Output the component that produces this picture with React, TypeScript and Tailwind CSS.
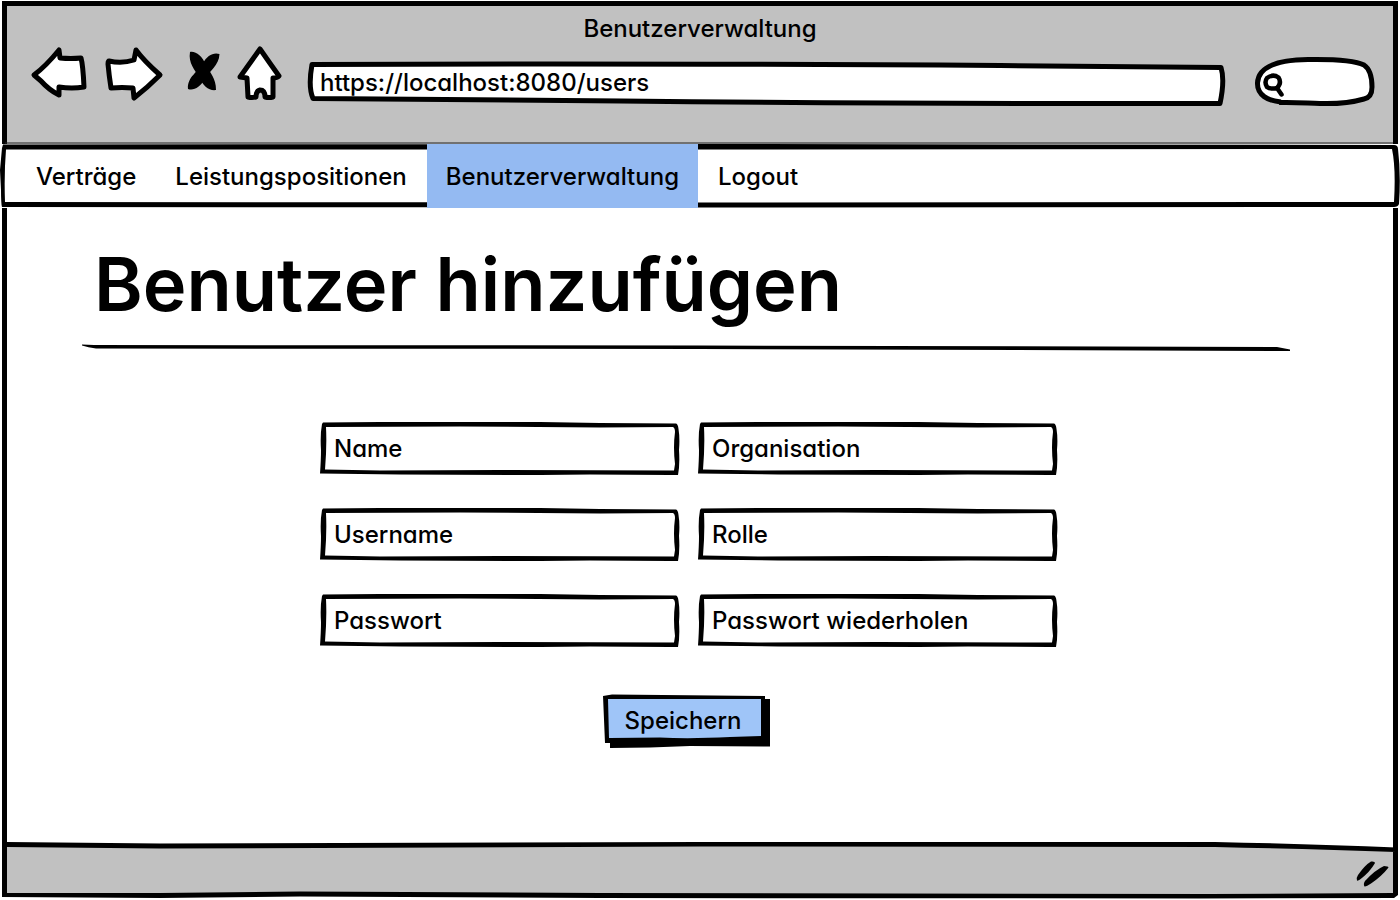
import type { ReactNode } from "react";

const navItems = [
  { label: "Verträge", href: "#vertraege" },
  { label: "Leistungspositionen", href: "#leistungspositionen" },
  { label: "Benutzerverwaltung", href: "#benutzerverwaltung", active: true },
  { label: "Logout", href: "#logout" },
];

const fields = [
  { id: "name", label: "Name", type: "text" },
  { id: "organisation", label: "Organisation", type: "text" },
  { id: "username", label: "Username", type: "text" },
  { id: "rolle", label: "Rolle", type: "text" },
  { id: "passwort", label: "Passwort", type: "password" },
  { id: "passwort-wiederholen", label: "Passwort wiederholen", type: "password" },
];

/** Hand-drawn outline that stretches to fill its parent. */
function Sketch({ viewBox, children }: { viewBox: string; children: ReactNode }) {
  return (
    <svg
      aria-hidden="true"
      viewBox={viewBox}
      preserveAspectRatio="none"
      className="pointer-events-none absolute inset-0 h-full w-full overflow-visible"
    >
      {children}
    </svg>
  );
}

function ToolButton({ label, viewBox, size, children }: { label: string; viewBox: string; size: string; children: ReactNode }) {
  return (
    <button type="button" aria-label={label} className="block shrink-0">
      <svg
        aria-hidden="true"
        viewBox={viewBox}
        className={`block h-15 overflow-visible ${size}`}
        fill="#fff"
        stroke="#000"
        strokeWidth="5"
        strokeLinejoin="round"
        strokeLinecap="round"
      >
        {children}
      </svg>
    </button>
  );
}

function BrowserBar() {
  return (
    <header className="mx-0.5 mt-px h-[143px] border-x-5 border-t-5 border-black bg-[#c1c1c1]">
      <div className="pt-1.5 text-center leading-[34px]">Benutzerverwaltung</div>
      <div className="flex items-end pr-[18px] pl-6">
        <div className="flex gap-[18px]">
          <ToolButton label="Zurück" viewBox="31 46 56 60" size="w-14">
            <path d="M34 75Q46 66 59 50L60 58Q71 59 81 58Q83 65 84 87Q72 89 59 87L59 95Q49 90 41 81Z" />
          </ToolButton>
          <ToolButton label="Vor" viewBox="105 46 58 60" size="w-[58px]">
            <path d="M109 61Q122 64 134 60L136 50Q144 61 160 75Q147 88 134 98L133 88Q122 87 111 88Q109 75 108 64Q108 61 109 61Z" />
          </ToolButton>
          <ToolButton label="Abbrechen" viewBox="181 46 39 60" size="w-[39px]">
            <path
              stroke="none"
              fill="#000"
              d="M190 52C196 51 202 56 206 65C210 73 216 78 216 90C209 91 203 86 199 77C195 70 188 63 190 52Z"
            />
            <path
              stroke="none"
              fill="#000"
              d="M219.500 54C213 52 207 56 203 63C198 72 187 77 188 89C194 91 200 87 205 79C209 71 219 66 219.500 54Z"
            />
          </ToolButton>
          <ToolButton label="Startseite" viewBox="238 46 46 60" size="w-[46px]">
            <path d="M260 49Q269 62 279 76Q277 78 273 78L273 97Q269 98 265 97Q265 90 260 90Q256 91 256 97Q252 98 248 97L247 78L240 77Q250 63 260 49Z" />
          </ToolButton>
        </div>
        <div className="relative ml-6 h-11 flex-1">
          <Sketch viewBox="307 61 918 44">
            <path
              d="M311 63.5Q620 62 1000 64.500L1221 66.500Q1225 79 1220 102.500Q900 103 620 100L312 97.500Q307 86 311 63.500Z"
              fill="#fff"
              stroke="#000"
              strokeWidth="5"
              strokeLinejoin="round"
            />
          </Sketch>
          <input
            aria-label="Adresse"
            type="text"
            defaultValue="https://localhost:8080/users"
            className="relative block h-10 w-full bg-transparent px-3 outline-none"
          />
        </div>
        <div className="relative ml-[30px] h-[50px] w-30">
          <Sketch viewBox="1255 56 120 50">
            <path
              d="M1281 102C1268 101 1257 95 1257.500 83C1258 70 1270 60 1308 59.500C1340 59 1358 62 1364 65C1370 69 1372 78 1372 87C1372 95 1369 98 1364 99C1350 103 1335 104 1320 103.500C1305 103 1295 102 1279 102.500"
              fill="#fff"
              stroke="#000"
              strokeWidth="5"
            />
            <path
              d="M1277 88Q1270 89.500 1267 87Q1264 82 1267 78Q1273 73.500 1278.500 77.500Q1282 83 1277 88L1281.500 94.500"
              fill="none"
              stroke="#000"
              strokeWidth="4.5"
              strokeLinecap="round"
              strokeLinejoin="round"
            />
          </Sketch>
          <input aria-label="Suche" type="search" className="relative block h-full w-full bg-transparent pr-4 pl-8 outline-none" />
        </div>
      </div>
    </header>
  );
}

function MainNav() {
  return (
    <nav aria-label="Hauptmenü" className="relative h-16">
      <Sketch viewBox="0 0 1400 64">
        <path
          fillRule="evenodd"
          d="M3 .5L700 0L1394 1Q1398 1 1398 5Q1401 30 1399 60Q1398 63 1394 63L700 63.500L2 63Q1 60 1 46L0 26L2 4ZM6 5.500L700 5.500L1392 5Q1396 24 1394 58L700 58.500L5 58Q4 30 6 5.500Z"
        />
        <path d="M5 -1.500H1393V-.5H900L5 -.5Z" fill="#222" />
      </Sketch>
      <ul className="relative flex h-full gap-px pl-[17px]">
        {navItems.map((item) => (
          <li key={item.label}>
            <a
              href={item.href}
              aria-current={item.active ? "page" : undefined}
              className={`flex h-full items-center px-[19px] pt-0.5 ${item.active ? "bg-[#94baf2]" : ""}`}
            >
              {item.label}
            </a>
          </li>
        ))}
      </ul>
    </nav>
  );
}

function Field({ id, label, type }: { id: string; label: string; type: string }) {
  return (
    <div className="relative h-[53px]">
      <Sketch viewBox="320 422 360 53">
        <path
          fillRule="evenodd"
          d="M323 422.500L380 422L540 422L600 423L676 423.500Q678 424 678.500 429Q680 438 679 450Q680 465 678 475L670 475L590 474.500L540 475L400 474.500L320 473.500Q321 460 321 450Q320 435 322 424ZM326 427L460 426.500L600 427.500L673 427Q675 428 675 432Q673 447 675 464L674 470.500L500 470L380 470.500L325 469.500Q327 446 326 427Z"
        />
      </Sketch>
      <input
        id={id}
        type={type}
        aria-label={label}
        placeholder={label}
        className="relative block h-full w-full bg-transparent px-3.5 outline-none placeholder:text-black"
      />
    </div>
  );
}

function UserForm() {
  return (
    <form className="mx-auto mt-[70px] flex max-w-[738px] flex-col items-center" onSubmit={(e) => e.preventDefault()}>
      <div className="grid w-full grid-cols-2 gap-x-[18px] gap-y-[33px]">
        {fields.map((field) => (
          <Field key={field.id} {...field} />
        ))}
      </div>
      <div className="pr-1.5">
        <button type="submit" className="relative mt-12 h-[53px] w-[167px] pr-1.5 pb-0.5">
          <Sketch viewBox="603 695 167 53">
            <path d="M603 696L612 694.500L765 696V699H770V746.500L690 746L650 747.500L610 748V743H605Z" />
            <path d="M608 699H761V736L730 737Q690 739 660 737.500L609 738Z" fill="#9fc5f8" />
          </Sketch>
          <span className="relative">Speichern</span>
        </button>
      </div>
    </form>
  );
}

function StatusBar() {
  return (
    <footer className="relative flex h-14 items-center justify-end pt-1 pr-2.5">
      <Sketch viewBox="0 844 1400 56">
        <path d="M4 845L160 847L700 844.500L1215 845Q1310 847 1396 850V894L1200 895L300 894L160 896L4 895Z" fill="#c1c1c1" />
        <path d="M2 842H7L160 843.500L700 842L1215 842Q1310 844 1396 847.500V852Q1310 849 1215 847L700 846.500L160 848.500L7 847V893L160 893L300 891.500L600 893L1210 894L1393 893V842H1398V895L1394 898L1200 898.500L600 898L300 896.500L160 898L2 897Z" />
      </Sketch>
      <svg aria-hidden="true" viewBox="1356 860 34 30" className="relative h-[30px] w-[34px]">
        <path d="M1357 881.500Q1356 879 1358 876Q1365 866 1371 862.500Q1375 862 1375 864Q1370 873 1360 880.500Q1358 882 1357 881.500Z" />
        <path d="M1364.500 887.500Q1363 885 1365 882Q1375 871 1384 867Q1388 867 1388.500 868.500Q1382 877 1371 884.500Q1366 888 1364.500 887.500Z" />
      </svg>
    </footer>
  );
}

export default function App() {
  return (
    <div className="flex min-h-screen flex-col bg-white font-['Inter','Liberation_Sans',sans-serif] text-2xl font-medium text-black [font-feature-settings:'cv11']">
      <BrowserBar />
      <MainNav />
      <main className="mx-0.5 flex-1 border-x-5 border-black pr-[97px] pb-12 pl-[75px]">
        <h1 className="px-3 pt-7 text-[74px] leading-24 font-semibold">Benutzer hinzufügen</h1>
        <div className="relative mt-3 mr-1.5 h-2">
          <Sketch viewBox="82 344 1208 8">
            <path d="M82 344.500L94 345L700 345.500L1277 347L1290 349.500V351L1276 351L700 349L96 348.500Q88 347.500 82 345.500Z" />
          </Sketch>
        </div>
        <UserForm />
      </main>
      <StatusBar />
    </div>
  );
}
